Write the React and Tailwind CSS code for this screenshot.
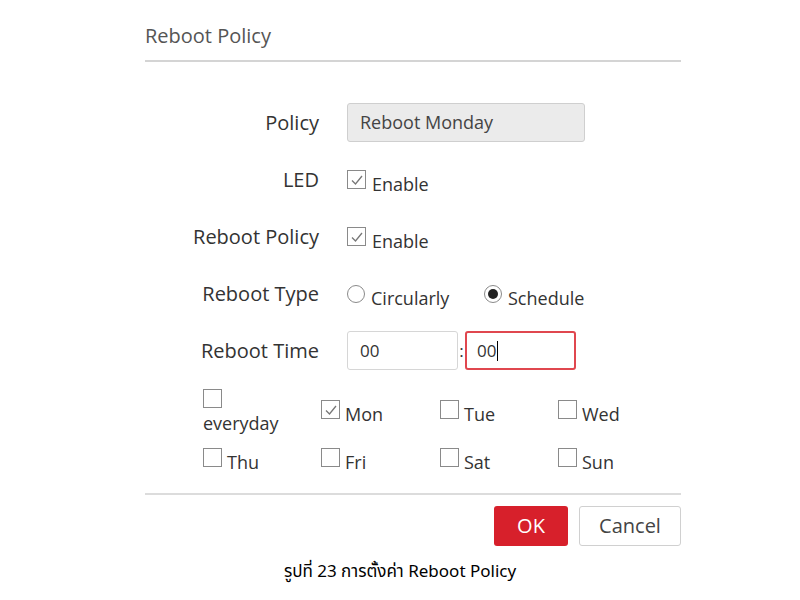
const font = { fontFamily: '"Open Sans", "Noto Sans", sans-serif' }

function Check({ checked }) {
  return (
    <span className="inline-flex w-[19px] h-[19px] border border-[#8a8a8a] bg-white items-center justify-center shrink-0">
      {checked && (
        <svg width="14" height="14" viewBox="0 0 14 14" fill="none">
          <path d="M2 7.5 L5.5 11 L12 3" stroke="#777" strokeWidth="1.3" />
        </svg>
      )}
    </span>
  )
}

function Radio({ checked }) {
  return (
    <span className="inline-flex w-[18px] h-[18px] rounded-full border border-[#8a8a8a] bg-white items-center justify-center shrink-0">
      {checked && <span className="w-[10px] h-[10px] rounded-full bg-[#222]" />}
    </span>
  )
}

function Row({ label, children }) {
  return (
    <div className="flex items-center h-[57px]">
      <div className="w-[174px] text-right text-[20px] text-[#333]">{label}</div>
      <div className="ml-[28px] flex items-center">{children}</div>
    </div>
  )
}

function Day({ label, checked }) {
  return (
    <div className="flex items-end gap-[5px] text-[18px] text-[#333] leading-none">
      <Check checked={checked} />
      <span className="translate-y-[4px]">{label}</span>
    </div>
  )
}

export default function App() {
  return (
    <div className="w-[800px] h-[600px] bg-white relative" style={font}>
      <div className="pl-[145px] w-[681px]">
        <div className="pt-[22px] h-[60px] text-[20px] text-[#555] leading-[28px]">Reboot Policy</div>
        <div className="h-[2px] bg-[#d4d4d4]" />

        <div className="pt-[32px]">
          <Row label="Policy">
            <div className="w-[238px] h-[39px] bg-[#ebebeb] border border-[#cfcfcf] rounded-[3px] flex items-center pl-[12px] text-[18px] text-[#444]">
              Reboot Monday
            </div>
          </Row>
          <Row label="LED">
            <div className="flex items-end gap-[6px] text-[18px] text-[#333] leading-none">
              <Check checked />
              <span className="translate-y-[4px]">Enable</span>
            </div>
          </Row>
          <Row label="Reboot Policy">
            <div className="flex items-end gap-[6px] text-[18px] text-[#333] leading-none">
              <Check checked />
              <span className="translate-y-[4px]">Enable</span>
            </div>
          </Row>
          <Row label="Reboot Type">
            <div className="flex items-end gap-[6px] text-[18px] text-[#333] leading-none w-[137px]">
              <Radio />
              <span className="translate-y-[4px]">Circularly</span>
            </div>
            <div className="flex items-end gap-[6px] text-[18px] text-[#333] leading-none">
              <Radio checked />
              <span className="translate-y-[4px]">Schedule</span>
            </div>
          </Row>
          <Row label="Reboot Time">
            <div className="w-[111px] h-[39px] border border-[#d6d6d6] rounded-[3px] flex items-center pl-[12px] text-[17px] text-[#333]">
              00
            </div>
            <span className="w-[7px] text-center text-[17px] text-[#333]">:</span>
            <div className="w-[111px] h-[39px] border-2 border-[#e0474f] rounded-[3px] flex items-center pl-[10px] text-[17px] text-[#333]">
              00<span className="w-px h-[20px] bg-black ml-px" />
            </div>
          </Row>
        </div>

        <div className="pl-[58px] pt-[10px] grid grid-cols-[118px_119px_118px_118px] gap-y-[16px]">
          <div className="flex flex-col text-[18px] text-[#333] leading-none">
            <Check />
            <span className="mt-[6px]">everyday</span>
          </div>
          <div className="pt-[11px]"><Day label="Mon" checked /></div>
          <div className="pt-[11px]"><Day label="Tue" /></div>
          <div className="pt-[11px]"><Day label="Wed" /></div>
          <Day label="Thu" />
          <Day label="Fri" />
          <Day label="Sat" />
          <Day label="Sun" />
        </div>

        <div className="mt-[26px] h-[2px] bg-[#dcdcdc]" />
        <div className="flex justify-end gap-[11px] pt-[11px]">
          <button className="w-[74px] h-[40px] bg-[#d7202b] rounded-[3px] text-white text-[20px]">OK</button>
          <button className="w-[102px] h-[40px] bg-white border border-[#d0d0d0] rounded-[3px] text-[#444] text-[20px]">Cancel</button>
        </div>
      </div>
      <div className="absolute left-0 right-0 top-[560px] text-center text-[17px] text-black" style={{ fontFamily: '"Noto Sans Thai", "Noto Sans", "DejaVu Sans", sans-serif' }}>
        รูปที่ 23 การตั้งค่า Reboot Policy
      </div>
    </div>
  )
}
